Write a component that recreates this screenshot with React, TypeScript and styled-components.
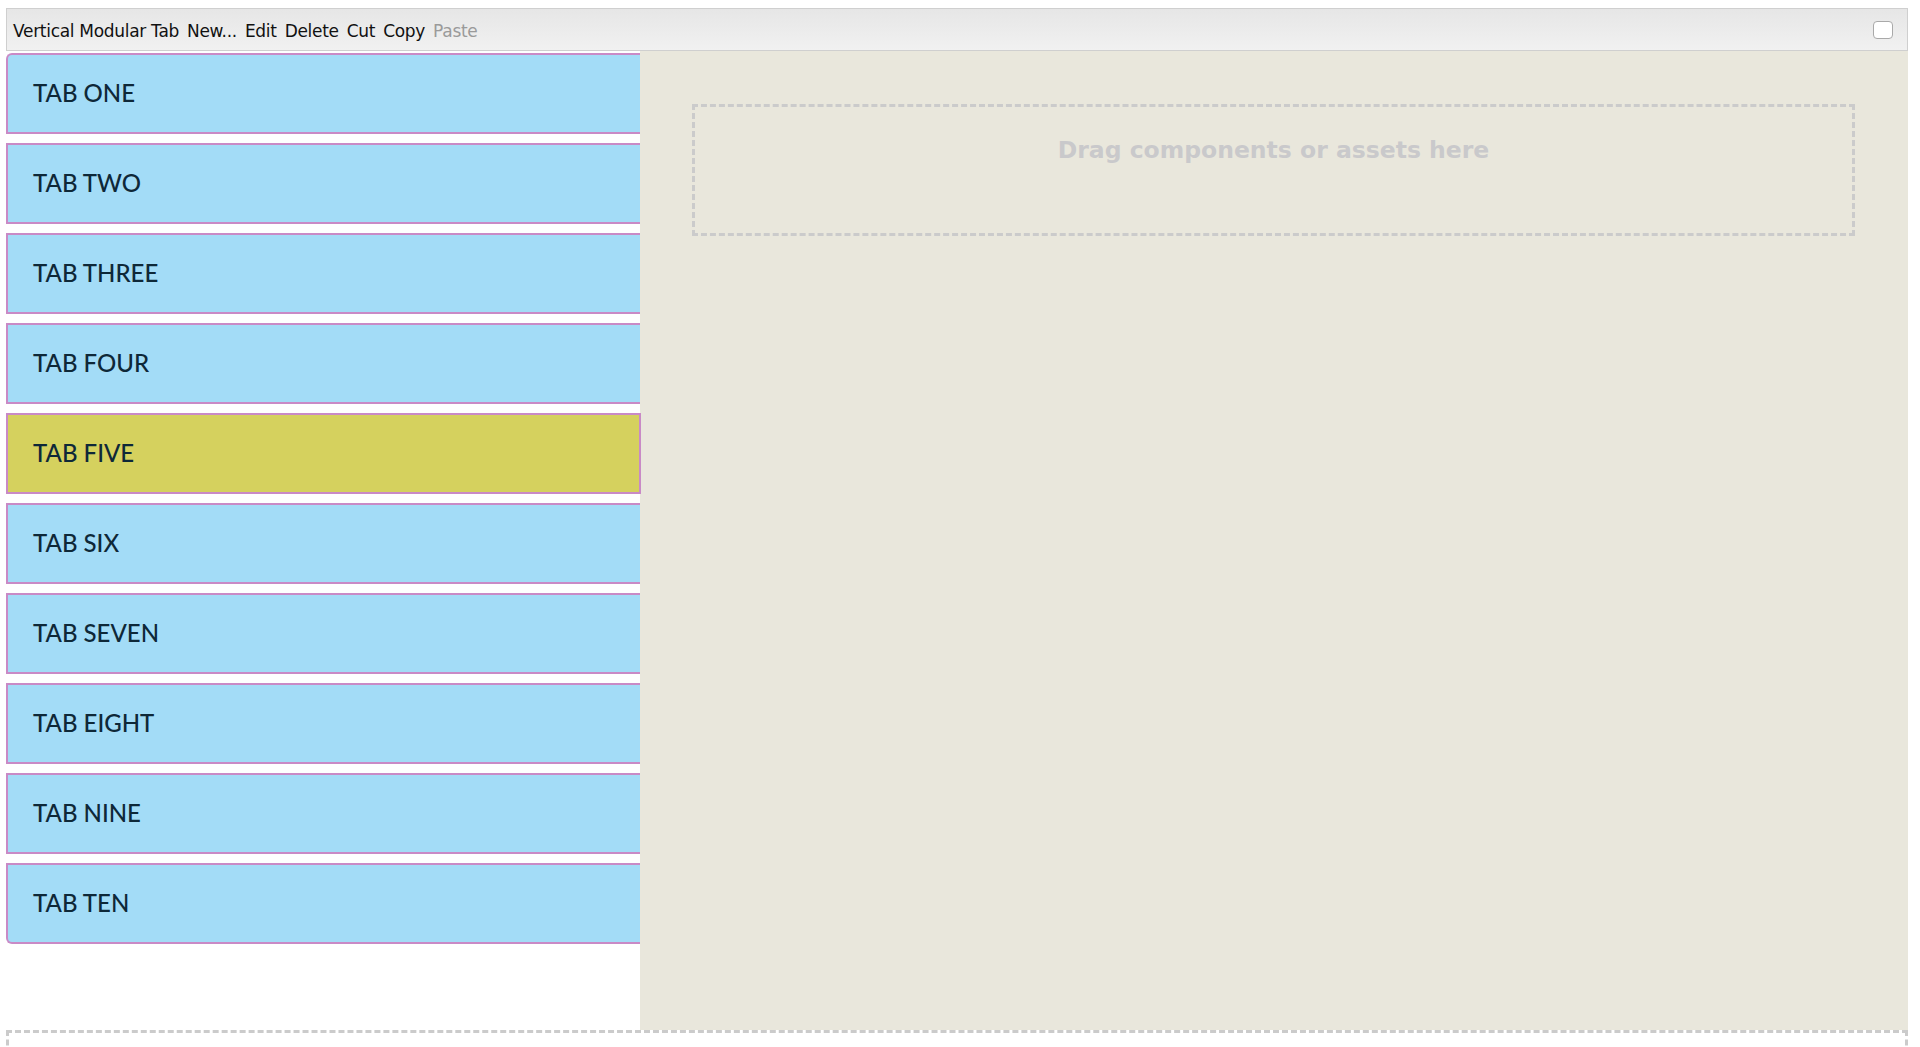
import React, { useState } from "react";
import styled, { createGlobalStyle, css } from "styled-components";

const GlobalStyle = createGlobalStyle`
  html, body {
    margin: 0;
    padding: 0;
    background: #ffffff;
  }
  body {
    overflow: hidden;
  }
`;

const TABS = [
  "TAB ONE",
  "TAB TWO",
  "TAB THREE",
  "TAB FOUR",
  "TAB FIVE",
  "TAB SIX",
  "TAB SEVEN",
  "TAB EIGHT",
  "TAB NINE",
  "TAB TEN",
];

const App = () => {
  const [active, setActive] = useState(4);

  return (
    <>
      <GlobalStyle />
      <Page>
        <Toolbar>
          <MenuTitle>Vertical Modular Tab</MenuTitle>
          <MenuItem>New...</MenuItem>
          <MenuItem>Edit</MenuItem>
          <MenuItem>Delete</MenuItem>
          <MenuItem>Cut</MenuItem>
          <MenuItem>Copy</MenuItem>
          <MenuItem disabled>Paste</MenuItem>
          <Spacer />
          <CheckBox />
        </Toolbar>
        <Body>
          <TabList>
            {TABS.map((label, i) => (
              <Tab
                key={label}
                active={i === active}
                first={i === 0}
                last={i === TABS.length - 1}
                onClick={() => setActive(i)}
              >
                {label}
              </Tab>
            ))}
          </TabList>
          <Panel>
            <DropZone>Drag components or assets here</DropZone>
          </Panel>
        </Body>
        <BottomZone />
      </Page>
    </>
  );
};

export default App;

export const Page = styled.div`
  margin: 8px 12px 0 6px;
  display: flex;
  flex-direction: column;
`;

export const Toolbar = styled.div`
  display: flex;
  flex-direction: row;
  align-items: center;
  padding: 2px 14px 0 6px;
  box-sizing: border-box;
  height: 43px;
  border: 1px solid #cfcfcf;
  background: linear-gradient(to bottom, #e6e6e6, #f1f1f1);
  font-family: "DejaVu Sans", "Liberation Sans", sans-serif;
  font-size: 17px;
  color: #111111;
`;

export const MenuTitle = styled.span`
  margin-right: 8px;
  letter-spacing: -0.3px;
`;

export const MenuItem = styled.span<{ disabled?: boolean }>`
  margin-right: 8px;
  letter-spacing: -0.3px;
  color: ${(p) => (p.disabled ? "#9a9a9a" : "#111111")};
`;

export const Spacer = styled.div`
  flex: 1;
`;

export const CheckBox = styled.div`
  width: 18px;
  height: 16px;
  margin-top: -2px;
  border: 1px solid #a9a9a9;
  border-radius: 4px;
  background: #ffffff;
`;

export const Body = styled.div`
  display: flex;
  flex-direction: row;
  height: 979px;
`;

export const TabList = styled.div`
  width: 634px;
  flex-shrink: 0;
  display: flex;
  flex-direction: column;
  gap: 9px;
  padding-top: 2px;
`;

const activeTab = css`
  background: #d5d15e;
  border-right: 2px solid #c98ac6;
  margin-right: -1px;
`;

export const Tab = styled.div<{ active?: boolean; first?: boolean; last?: boolean }>`
  box-sizing: border-box;
  height: 81px;
  display: flex;
  align-items: center;
  padding: 0 0 2px 25px;
  background: #a3dcf7;
  border: 2px solid #c98ac6;
  border-right: none;
  border-top-left-radius: ${(p) => (p.first ? "6px" : "0")};
  border-bottom-left-radius: ${(p) => (p.last ? "6px" : "0")};
  font-family: Lato, "Noto Sans", sans-serif;
  font-size: 24px;
  font-weight: 500;
  color: #0e2838;
  cursor: pointer;
  position: relative;
  z-index: 1;
  ${(p) => p.active && activeTab}
`;

export const Panel = styled.div`
  flex: 1;
  background: #e9e7dc;
  padding: 53px 53px 0 52px;
`;

export const DropZone = styled.div`
  height: 97px;
  border: 3px dashed #cbcbcb;
  padding-top: 29px;
  text-align: center;
  font-family: "DejaVu Sans", Verdana, sans-serif;
  font-weight: bold;
  font-size: 23.5px;
  color: #c9c9cb;
`;

export const BottomZone = styled.div`
  height: 60px;
  border: 3px dashed #cbcbcb;
  border-bottom: none;
`;
